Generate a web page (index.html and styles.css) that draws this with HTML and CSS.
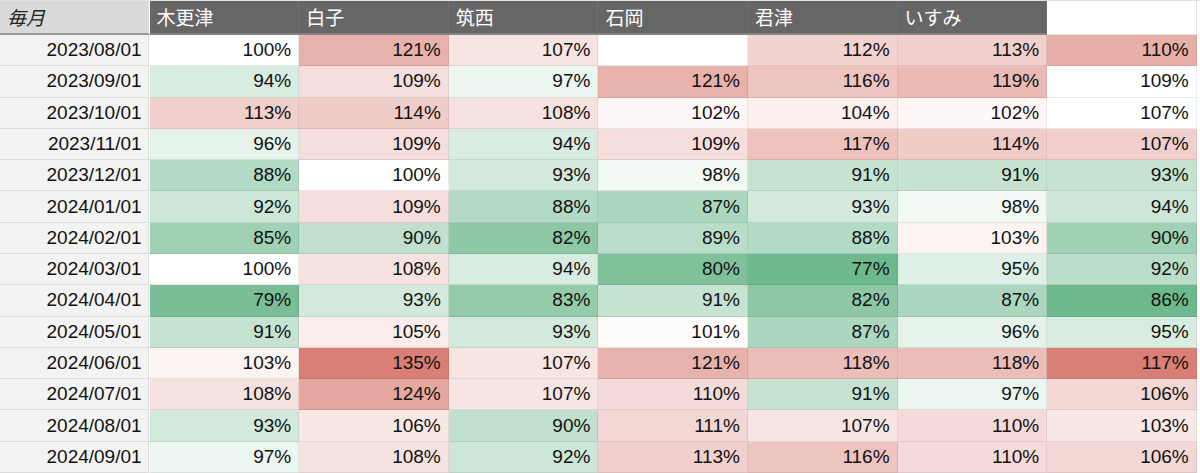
FILE: index.html
```html
<!DOCTYPE html>
<html lang="ja">
<head>
<meta charset="utf-8">
<title>毎月</title>
<link rel="stylesheet" href="styles.css">
</head>
<body>
<div class="sheet">
  <div class="hd hd-first">毎月</div>
  <div class="hd">木更津</div>
  <div class="hd">白子</div>
  <div class="hd">筑西</div>
  <div class="hd">石岡</div>
  <div class="hd">君津</div>
  <div class="hd">いすみ</div>
  <div class="hd hd-blank"></div>

  <div class="date">2023/08/01</div>
  <div class="c" style="--v:100">100%</div><div class="c" style="--v:121">121%</div><div class="c" style="--v:107">107%</div><div class="c" style="--v:100"></div><div class="c" style="--v:112">112%</div><div class="c" style="--v:113">113%</div><div class="c" style="--v:122">110%</div>

  <div class="date">2023/09/01</div>
  <div class="c" style="--v:94">94%</div><div class="c" style="--v:109">109%</div><div class="c" style="--v:97">97%</div><div class="c" style="--v:121">121%</div><div class="c" style="--v:116">116%</div><div class="c" style="--v:119">119%</div><div class="c" style="--v:100">109%</div>

  <div class="date">2023/10/01</div>
  <div class="c" style="--v:113">113%</div><div class="c" style="--v:114">114%</div><div class="c" style="--v:108">108%</div><div class="c" style="--v:102">102%</div><div class="c" style="--v:104">104%</div><div class="c" style="--v:102">102%</div><div class="c" style="--v:100">107%</div>

  <div class="date">2023/11/01</div>
  <div class="c" style="--v:96">96%</div><div class="c" style="--v:109">109%</div><div class="c" style="--v:94">94%</div><div class="c" style="--v:109">109%</div><div class="c" style="--v:117">117%</div><div class="c" style="--v:114">114%</div><div class="c" style="--v:113">107%</div>

  <div class="date">2023/12/01</div>
  <div class="c" style="--v:88">88%</div><div class="c" style="--v:100">100%</div><div class="c" style="--v:93">93%</div><div class="c" style="--v:98">98%</div><div class="c" style="--v:91">91%</div><div class="c" style="--v:91">91%</div><div class="c" style="--v:91">93%</div>

  <div class="date">2024/01/01</div>
  <div class="c" style="--v:92">92%</div><div class="c" style="--v:109">109%</div><div class="c" style="--v:88">88%</div><div class="c" style="--v:87">87%</div><div class="c" style="--v:93">93%</div><div class="c" style="--v:98">98%</div><div class="c" style="--v:92">94%</div>

  <div class="date">2024/02/01</div>
  <div class="c" style="--v:85">85%</div><div class="c" style="--v:90">90%</div><div class="c" style="--v:82">82%</div><div class="c" style="--v:89">89%</div><div class="c" style="--v:88">88%</div><div class="c" style="--v:103">103%</div><div class="c" style="--v:85">90%</div>

  <div class="date">2024/03/01</div>
  <div class="c" style="--v:100">100%</div><div class="c" style="--v:108">108%</div><div class="c" style="--v:94">94%</div><div class="c" style="--v:80">80%</div><div class="c" style="--v:77">77%</div><div class="c" style="--v:95">95%</div><div class="c" style="--v:89">92%</div>

  <div class="date">2024/04/01</div>
  <div class="c" style="--v:79">79%</div><div class="c" style="--v:93">93%</div><div class="c" style="--v:83">83%</div><div class="c" style="--v:91">91%</div><div class="c" style="--v:82">82%</div><div class="c" style="--v:87">87%</div><div class="c" style="--v:77">86%</div>

  <div class="date">2024/05/01</div>
  <div class="c" style="--v:91">91%</div><div class="c" style="--v:105">105%</div><div class="c" style="--v:93">93%</div><div class="c" style="--v:101">101%</div><div class="c" style="--v:87">87%</div><div class="c" style="--v:96">96%</div><div class="c" style="--v:94">95%</div>

  <div class="date">2024/06/01</div>
  <div class="c" style="--v:103">103%</div><div class="c" style="--v:135">135%</div><div class="c" style="--v:107">107%</div><div class="c" style="--v:121">121%</div><div class="c" style="--v:118">118%</div><div class="c" style="--v:118">118%</div><div class="c" style="--v:135">117%</div>

  <div class="date">2024/07/01</div>
  <div class="c" style="--v:108">108%</div><div class="c" style="--v:124">124%</div><div class="c" style="--v:107">107%</div><div class="c" style="--v:110">110%</div><div class="c" style="--v:91">91%</div><div class="c" style="--v:97">97%</div><div class="c" style="--v:111">106%</div>

  <div class="date">2024/08/01</div>
  <div class="c" style="--v:93">93%</div><div class="c" style="--v:106">106%</div><div class="c" style="--v:90">90%</div><div class="c" style="--v:111">111%</div><div class="c" style="--v:107">107%</div><div class="c" style="--v:110">110%</div><div class="c" style="--v:106">103%</div>

  <div class="date">2024/09/01</div>
  <div class="c" style="--v:97">97%</div><div class="c" style="--v:108">108%</div><div class="c" style="--v:92">92%</div><div class="c" style="--v:113">113%</div><div class="c" style="--v:116">116%</div><div class="c" style="--v:110">110%</div><div class="c" style="--v:111">106%</div>
</div>
</body>
</html>
```

FILE: styles.css
```css
html, body {
  margin: 0;
  padding: 0;
  background: #ffffff;
}

body {
  font-family: "Liberation Sans", Arial, "Noto Sans CJK JP", sans-serif;
  font-size: 19px;
  color: #111111;
  overflow: hidden;
}

.sheet {
  display: grid;
  grid-template-columns: repeat(8, 149.6px);
  grid-template-rows: 34px repeat(14, 1fr);
  height: 473px;
  border-top: 1px solid #e2e2e2;
  box-sizing: border-box;
}

.hd {
  display: flex;
  align-items: center;
  padding-left: 7px;
  background: #666666;
  color: #ffffff;
  font-family: "Liberation Sans", "Noto Sans CJK JP", sans-serif;
  border-right: 1px solid #707070;
  border-bottom: 2px solid #858585;
  box-sizing: border-box;
  padding-bottom: 2px;
}

.hd-first {
  background: #d9d9d9;
  color: #222222;
  font-style: italic;
  border-right: 1px solid #ffffff;
  border-bottom: 2px solid #9a9a9a;
}

.hd-blank {
  background: #ffffff;
  border-right: 1px solid #e2e2e2;
  border-bottom: 1px solid #e2e2e2;
}

.date {
  display: flex;
  align-items: center;
  justify-content: flex-end;
  padding-right: 7px;
  background: #f3f3f3;
  border-bottom: 1px solid #dcdcdc;
  border-right: 1px solid #ffffff;
  box-shadow: inset -1px 0 0 #dddddd;
  box-sizing: border-box;
}

.c {
  display: flex;
  align-items: center;
  justify-content: flex-end;
  padding-right: 7px;
  box-sizing: border-box;
  border-right: 1px solid rgba(0, 0, 0, 0.07);
  border-bottom: 1px solid rgba(0, 0, 0, 0.08);
  background-color: color-mix(in srgb,
    #d97f75 clamp(0%, calc((var(--v) - 100) / 35 * 100%), 100%),
    color-mix(in srgb, #6db88d clamp(0%, calc((100 - var(--v)) / 23 * 100%), 100%), #ffffff));
}
```
